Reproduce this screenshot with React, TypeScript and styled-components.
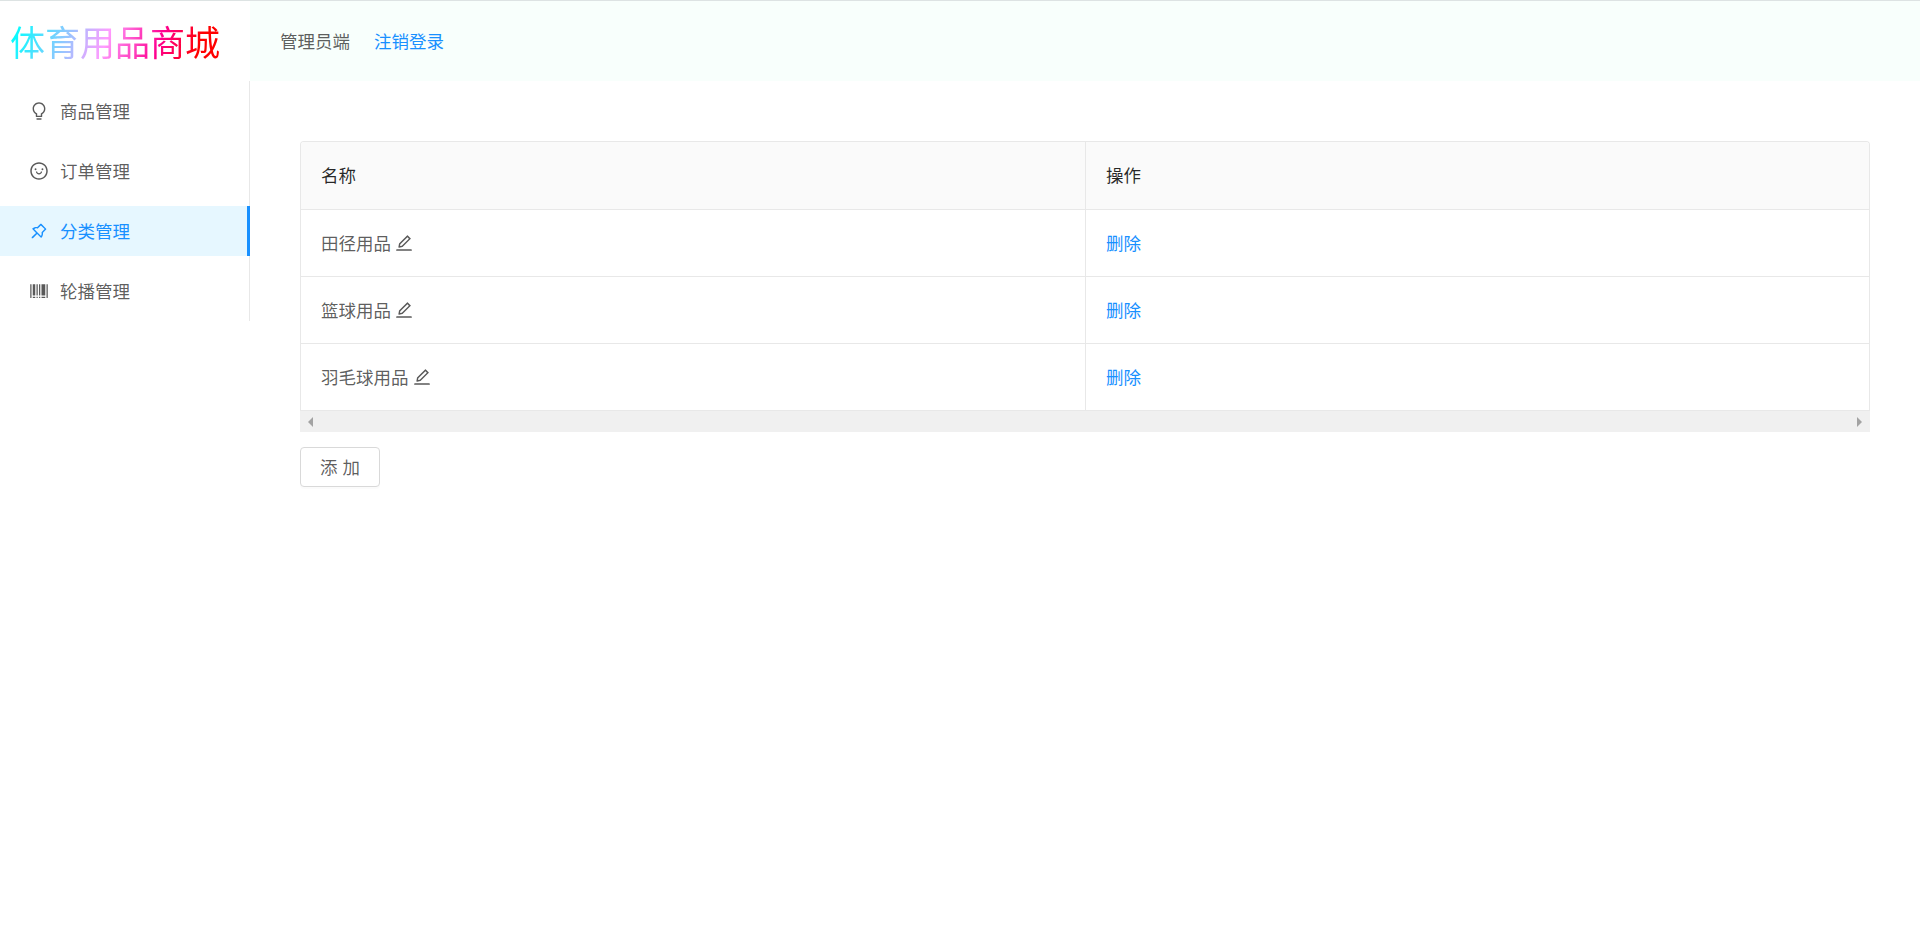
import React from "react";
import styled, { createGlobalStyle } from "styled-components";
import {
  AiOutlineBulb,
  AiOutlineSmile,
  AiOutlinePushpin,
  AiOutlineBarcode,
  AiOutlineEdit,
} from "react-icons/ai";

const GlobalStyle = createGlobalStyle`
  html, body {
    margin: 0;
    padding: 0;
    background: #fff;
  }
  body {
    font-family: "Noto Sans CJK SC", "Liberation Sans", sans-serif;
    font-size: 14px;
    color: rgba(0, 0, 0, 0.65);
  }
  * {
    box-sizing: border-box;
  }
`;

const Page = styled.div`
  min-height: 942px;
  border-top: 1px solid #dde3e3;
  display: flex;
  flex-direction: column;
`;

const Top = styled.header`
  display: flex;
  height: 80px;
`;

const LogoBox = styled.div`
  width: 250px;
  display: flex;
  align-items: center;
  padding-left: 10px;
`;

const Logo = styled.h1`
  margin: 0;
  font-size: 35px;
  font-weight: 400;
  line-height: 1.2;
  white-space: nowrap;
  background: linear-gradient(110deg, #00ffff 3%, #ff9cff 46%, #ff0090 70%, #ff0000 88%);
  -webkit-background-clip: text;
  background-clip: text;
  color: transparent;
`;

const HeaderBar = styled.div`
  flex: 1;
  background: #f8fffc;
  display: flex;
  align-items: center;
  padding: 0 0 2px 30px;
  gap: 24px;
  font-size: 17.5px;
`;

const HeaderLink = styled.a<{ $active?: boolean }>`
  color: ${(p) => (p.$active ? "#1890ff" : "rgba(0, 0, 0, 0.65)")};
  text-decoration: none;
  cursor: pointer;
`;

const Body = styled.div`
  display: flex;
  align-items: flex-start;
`;

const Sider = styled.nav`
  width: 250px;
  flex: none;
  height: 240px;
  padding-top: 5px;
  border-right: 1px solid #e8e8e8;
  display: flex;
  flex-direction: column;
  gap: 10px;
`;

const MenuItem = styled.div<{ $selected?: boolean }>`
  height: 50px;
  width: 250px;
  flex: none;
  padding-left: 30px;
  display: flex;
  align-items: center;
  gap: 12.5px;
  font-size: 17.5px;
  cursor: pointer;
  color: ${(p) => (p.$selected ? "#1890ff" : "rgba(0, 0, 0, 0.65)")};
  background: ${(p) => (p.$selected ? "#e6f7ff" : "transparent")};
  border-right: ${(p) => (p.$selected ? "3px solid #1890ff" : "none")};

  svg {
    font-size: 20px;
    margin: 0 -1.25px;
    flex: none;
  }
`;

const MenuLabel = styled.span`
  padding-bottom: 2px;
`;

const Content = styled.main`
  flex: 1;
  padding: 60px 50px 0;
`;

const TableWrap = styled.div`
  border: 1px solid #e8e8e8;
  border-bottom: none;
  border-radius: 4px 4px 0 0;
  overflow: hidden;
`;

const Table = styled.table`
  width: 100%;
  table-layout: fixed;
  border-collapse: separate;
  border-spacing: 0;
  font-size: 17.5px;
`;

const HeadCell = styled.th`
  height: 68px;
  padding: 0 20px 2px;
  text-align: left;
  font-weight: 400;
  color: rgba(0, 0, 0, 0.85);
  background: #fafafa;
  border-bottom: 1px solid #e8e8e8;
  &:first-child {
    width: 785px;
    border-right: 1px solid #e8e8e8;
  }
`;

const Cell = styled.td`
  height: 67px;
  padding: 0 20px 2px;
  border-bottom: 1px solid #e8e8e8;
  &:first-child {
    border-right: 1px solid #e8e8e8;
  }
`;

const EditIcon = styled(AiOutlineEdit)`
  font-size: 20px;
  margin-left: 3px;
  vertical-align: -3px;
  cursor: pointer;
`;

const DeleteLink = styled.a`
  color: #1890ff;
  cursor: pointer;
`;

const ScrollBar = styled.div`
  height: 21px;
  background: #f0f0f0;
  display: flex;
  align-items: center;
  justify-content: space-between;
  padding: 0 8px;
`;

const Arrow = styled.span<{ $dir: "left" | "right" }>`
  width: 0;
  height: 0;
  border-top: 5px solid transparent;
  border-bottom: 5px solid transparent;
  border-${(p) => (p.$dir === "left" ? "right" : "left")}: 5px solid #a3a3a3;
`;

const AddButton = styled.button`
  display: block;
  margin-top: 15px;
  width: 80px;
  height: 40px;
  padding: 0 0 2px;
  font-family: inherit;
  font-size: 17.5px;
  word-spacing: 1px;
  color: rgba(0, 0, 0, 0.65);
  background: #fff;
  border: 1px solid #d9d9d9;
  border-radius: 4px;
  box-shadow: 0 2px 0 rgba(0, 0, 0, 0.015);
  cursor: pointer;
`;

const menu = [
  { label: "商品管理", icon: <AiOutlineBulb /> },
  { label: "订单管理", icon: <AiOutlineSmile /> },
  { label: "分类管理", icon: <AiOutlinePushpin />, selected: true },
  { label: "轮播管理", icon: <AiOutlineBarcode /> },
];

const rows = ["田径用品", "篮球用品", "羽毛球用品"];

export default function App() {
  return (
    <Page>
      <GlobalStyle />
      <Top>
        <LogoBox>
          <Logo>体育用品商城</Logo>
        </LogoBox>
        <HeaderBar>
          <HeaderLink>管理员端</HeaderLink>
          <HeaderLink $active>注销登录</HeaderLink>
        </HeaderBar>
      </Top>
      <Body>
        <Sider>
          {menu.map((m) => (
            <MenuItem key={m.label} $selected={m.selected}>
              {m.icon}
              <MenuLabel>{m.label}</MenuLabel>
            </MenuItem>
          ))}
        </Sider>
        <Content>
          <TableWrap>
            <Table>
              <thead>
                <tr>
                  <HeadCell>名称</HeadCell>
                  <HeadCell>操作</HeadCell>
                </tr>
              </thead>
              <tbody>
                {rows.map((r) => (
                  <tr key={r}>
                    <Cell>
                      {r}
                      <EditIcon />
                    </Cell>
                    <Cell>
                      <DeleteLink>删除</DeleteLink>
                    </Cell>
                  </tr>
                ))}
              </tbody>
            </Table>
          </TableWrap>
          <ScrollBar>
            <Arrow $dir="left" />
            <Arrow $dir="right" />
          </ScrollBar>
          <AddButton>添 加</AddButton>
        </Content>
      </Body>
    </Page>
  );
}
